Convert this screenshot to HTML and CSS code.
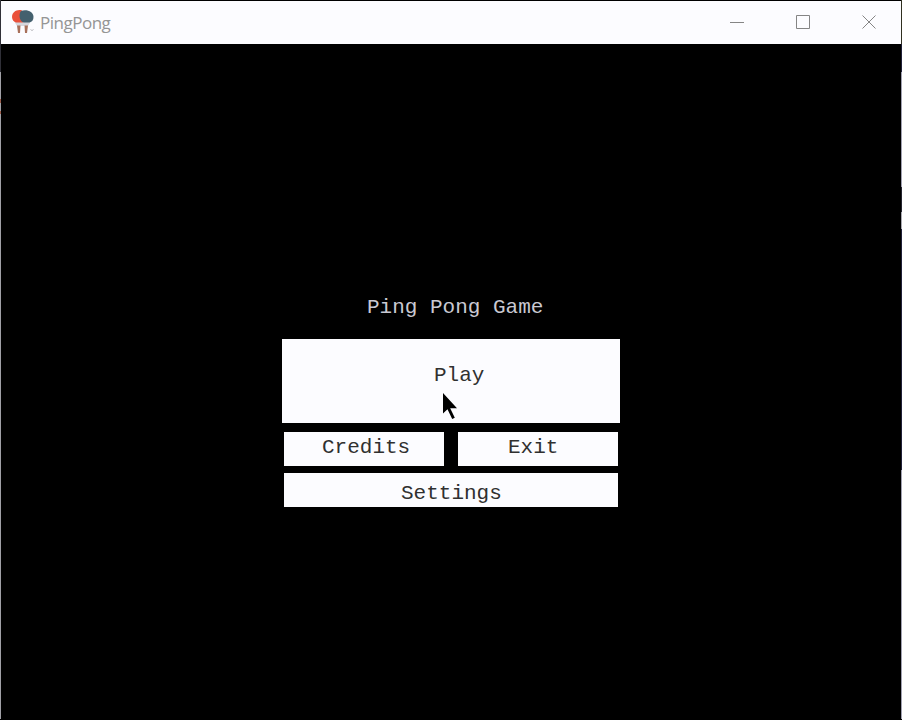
FILE: index.html
```html
<!DOCTYPE html>
<html lang="en">
<head>
<meta charset="utf-8">
<title>PingPong</title>
<link rel="stylesheet" href="styles.css">
</head>
<body>
<div class="window">
  <header class="titlebar">
    <svg class="app-icon" width="24" height="27" viewBox="0 0 24 27">
      <path d="M3 12h17l-3 5H6z" fill="#d6d6dc"/>
      <path d="M11 1.500C6 0 1 3 1 8c0 3 2 5 4 5.500h7z" fill="#ea503a"/>
      <path d="M10 2c6-2 12.500 1 12.500 6 0 3-1.500 5-4 5.500h-6C8 12 7.500 5 10 2z" fill="#44606e"/>
      <path d="M6 16.500h3.500l-.5 7.500H7zM13.500 16.500H17l-1 7.500h-2z" fill="#a8705a"/>
      <path d="M19.500 20l1.500 2 1.500-2" fill="none" stroke="#c8c8cc"/>
    </svg>
    <span class="title">PingPong</span>
    <div class="controls">
      <svg width="14" height="14" viewBox="0 0 14 14"><path d="M0 7.500h14"/></svg>
      <svg width="14" height="14" viewBox="0 0 14 14"><path d="M.5.5h13v13H.5z"/></svg>
      <svg width="14" height="14" viewBox="0 0 14 14"><path d="M.5.5l13 13M13.500.5l-13 13"/></svg>
    </div>
  </header>
  <main class="screen">
    <h1 class="heading">Ping Pong Game</h1>
    <nav class="menu">
      <button class="btn play">Play</button>
      <div class="row">
        <button class="btn credits">Credits</button>
        <button class="btn exit">Exit</button>
      </div>
      <button class="btn settings">Settings</button>
    </nav>
  </main>
  <svg class="cursor" width="16" height="28" viewBox="0 0 16 28"><path d="M1 0v20.500l4.500-4.300 4.700 9.800 2.600-1.300-4.600-9.400H15z"/></svg>
</div>
</body>
</html>
```
FILE: styles.css
```css
* { box-sizing: border-box; }
body { margin: 0; background: #000; }
.window {
  position: relative;
  width: 902px;
  height: 720px;
  display: flex;
  flex-direction: column;
  padding: 1px;
  background:
    linear-gradient(#303038 72px, #a0a0a6 72px 99px, #9a5a48 99px 103px, #a0a0a6 103px 111px, #9a5a48 111px 114px, #a0a0a6 114px) 0 0 / 1px 719px no-repeat,
    linear-gradient(#303020 44px, #202038 44px 72px, #a0a0b0 72px 187px, #252530 187px 212px, #a8a8b0 212px 229px, #202038 229px 470px, #a0a0b0 470px) 100% 0 / 1px 719px no-repeat,
    #000;
  overflow: hidden;
}
.titlebar {
  height: 43px;
  flex: none;
  display: flex;
  align-items: center;
  padding: 0 25px 0 10px;
  background: #fcfcff;
}
.app-icon { flex: none; }
.title {
  margin-left: 5px;
  font: 17px/24px "Open Sans", sans-serif;
  letter-spacing: -0.5px;
  color: #959595;
}
.controls { margin: 0 0 1px auto; display: flex; gap: 52px; }
.controls svg { fill: none; stroke: #858585; stroke-width: 1; }
.screen {
  flex: 1;
  padding: 252px 0 0 281px;
  font: 21px/24px "Liberation Mono", monospace;
}
.heading {
  margin: 0 0 19px 85px;
  font: inherit;
  color: #c9c9d2;
}
.menu { width: 338px; }
.btn {
  display: block;
  padding: 0;
  border: 0;
  border-radius: 0;
  background: #fcfcff;
  color: #303030;
  font: inherit;
  text-align: left;
}
.play { width: 338px; height: 84px; padding: 0 0 11px 152px; }
.row { display: flex; gap: 14px; margin: 9px 0 7px 2px; }
.row .btn { width: 160px; height: 34px; padding-bottom: 3px; }
.row .credits { padding-left: 38px; }
.row .exit { padding-left: 50px; }
.settings { width: 334px; height: 34px; margin-left: 2px; padding: 7px 0 0 117px; }
.cursor { position: absolute; left: 442px; top: 393px; fill: #000; }
```
